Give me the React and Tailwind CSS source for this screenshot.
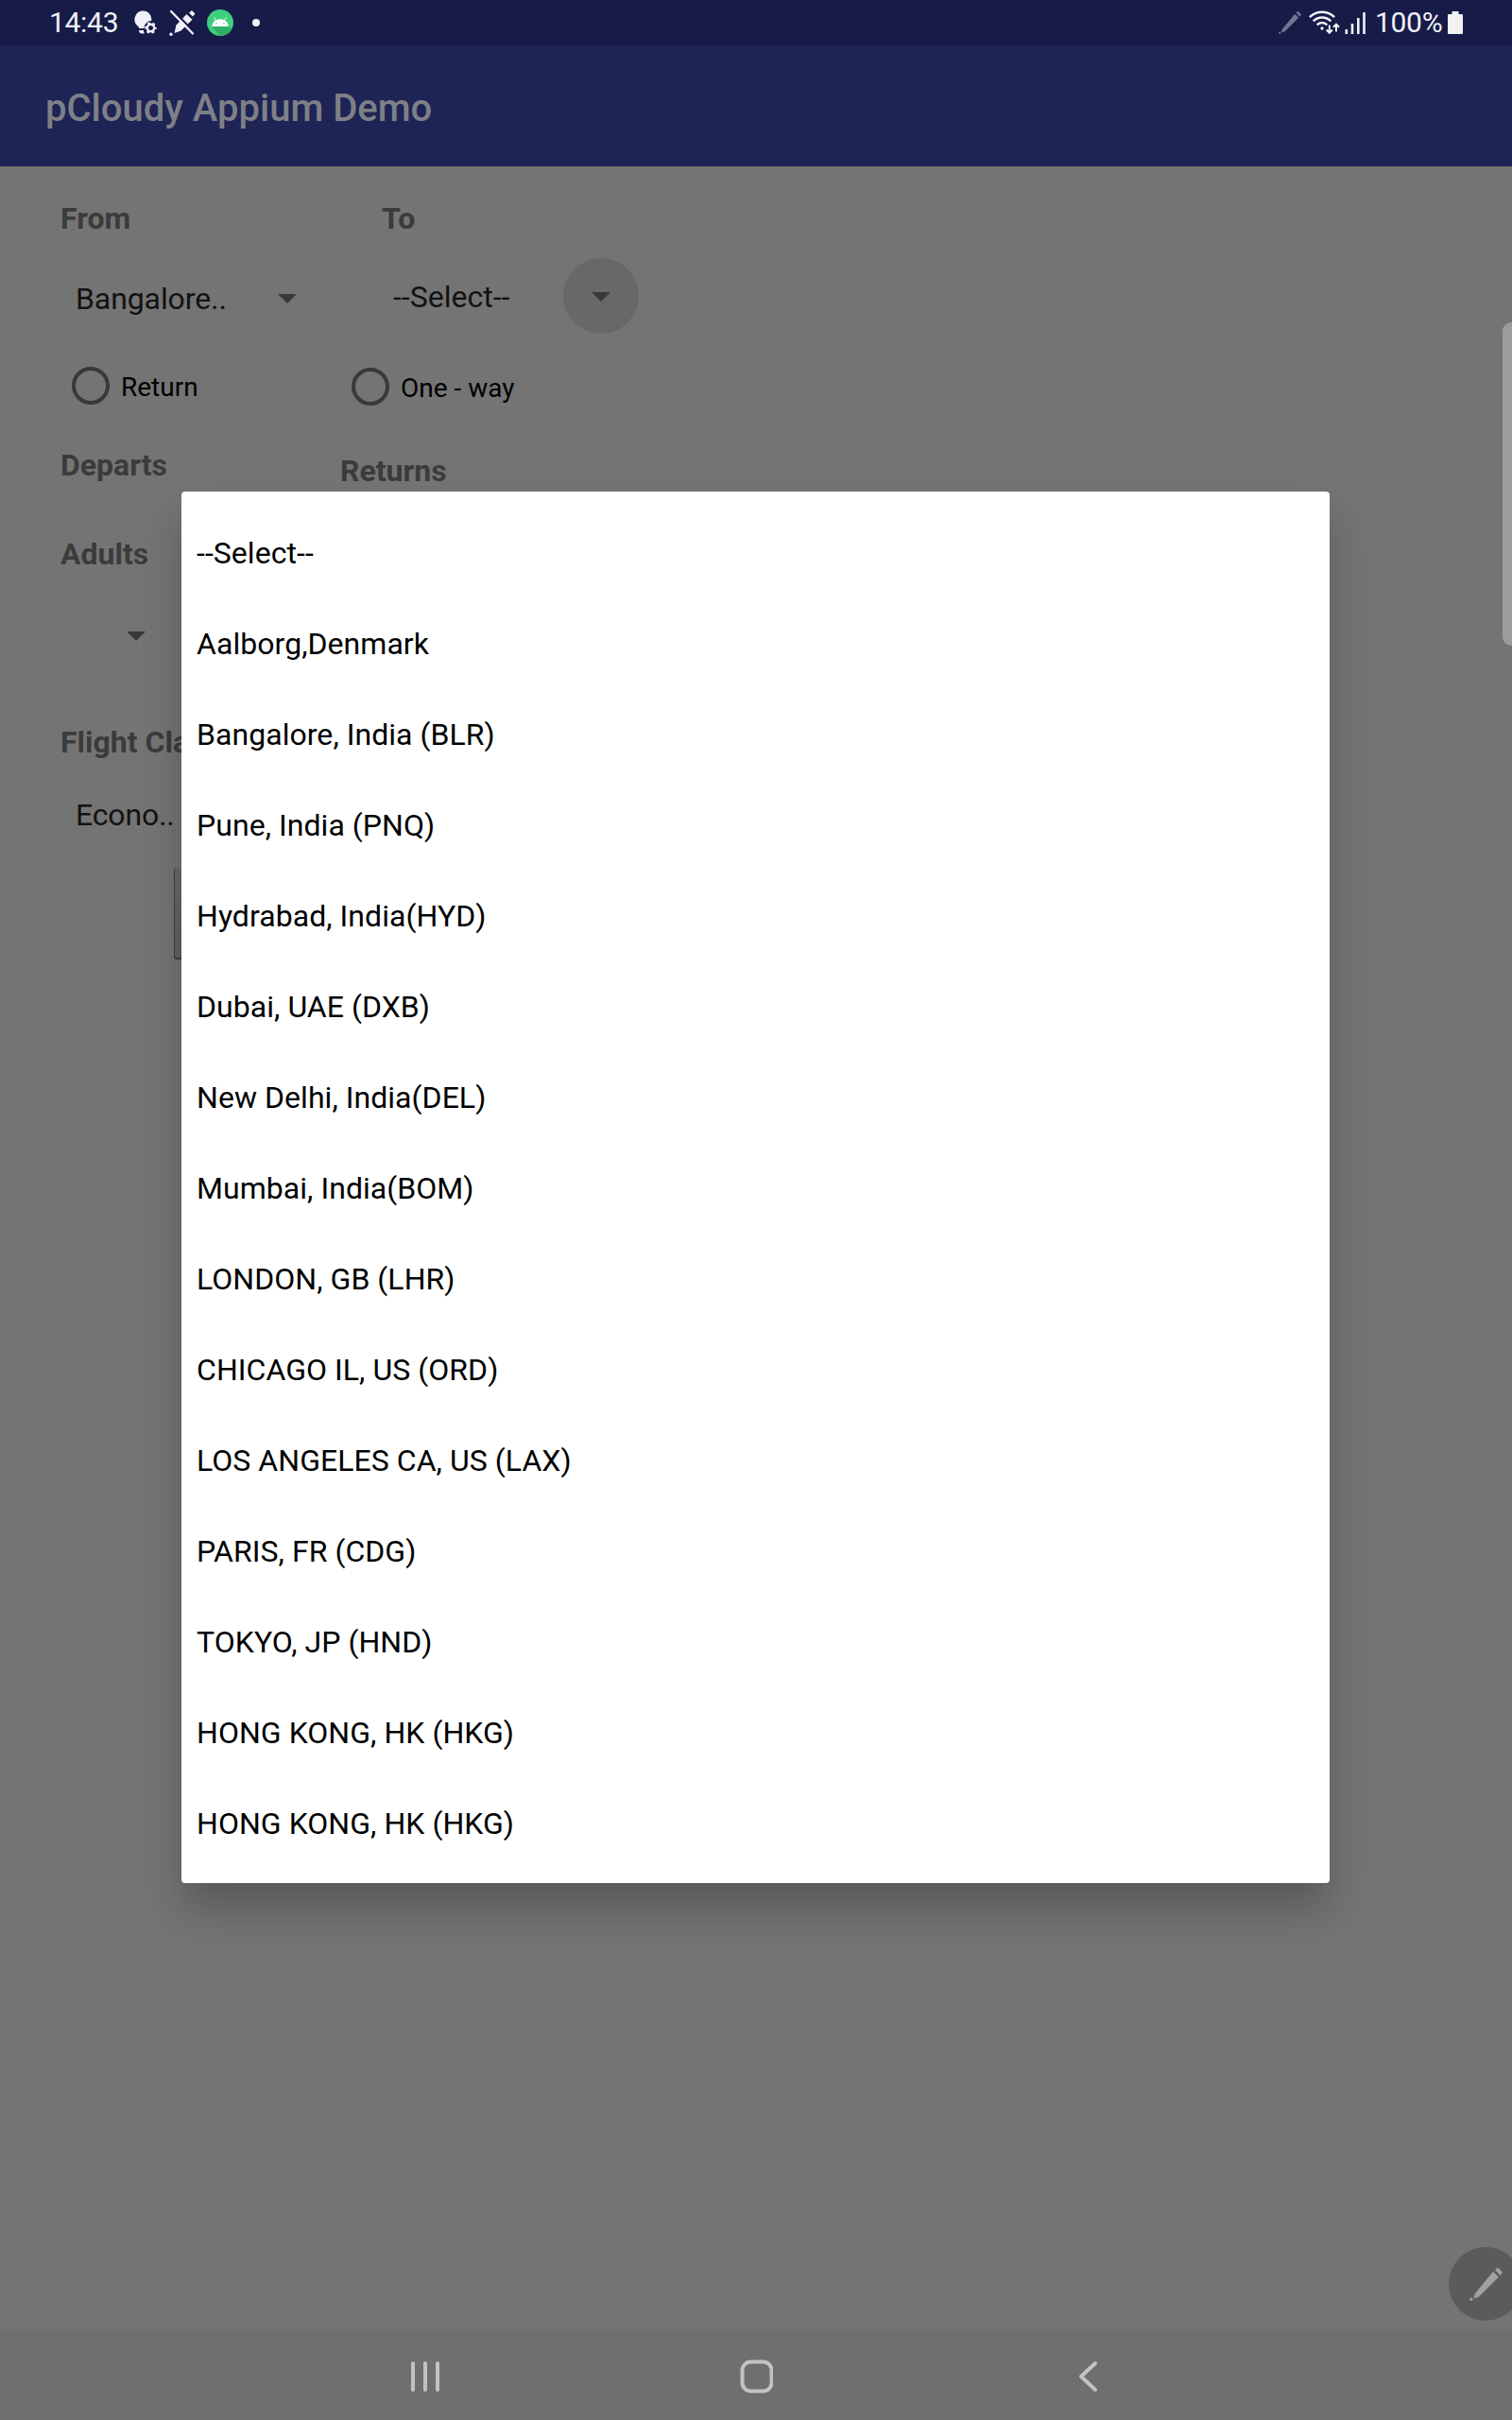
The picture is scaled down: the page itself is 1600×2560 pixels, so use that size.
const cities = [
  "--Select--",
  "Aalborg,Denmark",
  "Bangalore, India (BLR)",
  "Pune, India (PNQ)",
  "Hydrabad, India(HYD)",
  "Dubai, UAE (DXB)",
  "New Delhi, India(DEL)",
  "Mumbai, India(BOM)",
  "LONDON, GB (LHR)",
  "CHICAGO IL, US (ORD)",
  "LOS ANGELES CA, US (LAX)",
  "PARIS, FR (CDG)",
  "TOKYO, JP (HND)",
  "HONG KONG, HK (HKG)",
  "HONG KONG, HK (HKG)",
];

function BulbGearIcon() {
  return (
    <svg width="24" height="26" viewBox="0 0 24 26" className="ml-[16px]">
      <path d="M9.500 0.500a9 9 0 0 0-5.800 15.900c.9.800 1.300 1.500 1.500 2.600h5.200a8.300 8.300 0 0 1 7.900-8.200A9 9 0 0 0 9.500.5z" fill="#f0f1f7" />
      <path d="M5 21h4.800l1 3.500H8.500A3.500 3.500 0 0 1 5 21z" fill="#f0f1f7" />
      <circle cx="17.500" cy="18.500" r="3.700" fill="none" stroke="#f0f1f7" strokeWidth="2.400" />
      <circle cx="17.500" cy="18.500" r="5.300" fill="none" stroke="#f0f1f7" strokeWidth="2" strokeDasharray="2.775 2.775" strokeDashoffset="1.400" />
    </svg>
  );
}

function PenOffIcon() {
  return (
    <svg width="28" height="28" viewBox="0 0 28 28" className="ml-[13px]">
      <path d="M18.500 5l6 5.700L12.500 22.500l-7 2.500L7.500 16.500z" fill="#f0f1f7" />
      <path d="M21 3.600L24 .9l3.500 3.500-2.600 3z" fill="#f0f1f7" />
      <circle cx="2" cy="26.300" r="1.700" fill="#f0f1f7" />
      <path d="M3.500 0L27 24.500" stroke="#171b48" strokeWidth="2" />
      <path d="M2 2L25 25.500" stroke="#f0f1f7" strokeWidth="2.300" strokeLinecap="round" />
    </svg>
  );
}

function AndroidIcon() {
  return (
    <svg width="28" height="28" viewBox="0 0 28 28" className="ml-[12px]">
      <circle cx="14" cy="14" r="14" fill="#3ecf7c" />
      <path d="M22.800 17.800H5.400l5.600 7.200 4 3a14 14 0 0 0 11.500-7.500z" fill="#2fae68" />
      <path d="M5.300 18a8.700 7.800 0 0 1 17.400 0z" fill="#fff" />
      <path d="M7.500 8.500l2.200 3.800M20.500 8.500l-2.200 3.800" stroke="#fff" strokeWidth="1" />
      <circle cx="10" cy="14.800" r=".8" fill="#3ecf7c" />
      <circle cx="18" cy="14.800" r=".8" fill="#3ecf7c" />
    </svg>
  );
}

function PenIcon({ size, className, color }) {
  return (
    <svg width={size} height={size} viewBox="0 0 34 34" className={className} fill={color}>
      <path d="M24.300 4l5.700 5.500L12 27.500c-2 2-5 4.300-7.300 3.700-.7-2.200 1.200-5 3-7.200z" />
      <path d="M26.200 2.300L28.300.3q.9-.5 1.700.2l3.300 3.300q.8.900.2 1.700l-2 2.200z" />
      <circle cx="1.800" cy="32.200" r="1.700" />
    </svg>
  );
}

function WifiIcon() {
  return (
    <svg width="33" height="26" viewBox="0 0 33 26" className="ml-[8px]" fill="none" stroke="#f0f1f7" strokeWidth="2.500">
      <path d="M.9 7.200a18.500 18.500 0 0 1 26.200 0M4.700 11.300a13 13 0 0 1 18.600 0M8.700 15.300a7.500 7.500 0 0 1 10.600 0" />
      <circle cx="14" cy="19" r="1.700" fill="#f0f1f7" stroke="none" />
      <path d="M21.800 15.500v8M18.700 20.500l3.100 3.200 3.100-3.200M29 22.500v-7.500M26 17.700l3-3 3 3" strokeWidth="2" />
    </svg>
  );
}

function SignalIcon() {
  return (
    <svg width="22" height="23" viewBox="0 0 22 23" className="ml-[5px]" stroke="#f0f1f7" strokeWidth="2.600">
      <path d="M1.800 18v5M8 12v11M14.300 6v17M20.500 0v23" />
    </svg>
  );
}

function StatusBar() {
  return (
    <div className="flex h-[48px] items-center justify-between bg-[#171b48] pr-[52px] pl-[52px] text-[30px] leading-[48px] text-[#f0f1f7]">
      <div className="flex h-[46px] items-center">
        <span className="w-[74px] tracking-[-0.3px]">14:43</span>
        <BulbGearIcon />
        <PenOffIcon />
        <AndroidIcon />
        <span className="ml-[20px] size-[8px] rounded-full bg-[#f0f1f7]" />
      </div>
      <div className="flex h-[46px] items-center">
        <PenIcon size={24} color="#717492" />
        <WifiIcon />
        <SignalIcon />
        <span className="ml-[10px] w-[74px] tracking-[-0.3px]">100%</span>
        <svg width="16" height="24" viewBox="0 0 16 24" className="ml-[3px]" fill="#f2f2f4">
          <path d="M4.500 0h7v3H15a1 1 0 0 1 1 1v19a1 1 0 0 1-1 1H1a1 1 0 0 1-1-1V4a1 1 0 0 1 1-1h3.500z" />
        </svg>
      </div>
    </div>
  );
}

function Caret({ className }) {
  return (
    <svg width="20" height="10" viewBox="0 0 20 10" className={className} fill="#393939">
      <path d="M0 0h20L10 10z" />
    </svg>
  );
}

function Label({ children, className }) {
  return <div className={`text-[32px] leading-[40px] font-bold whitespace-nowrap text-[#3b3b3b] ${className}`}>{children}</div>;
}

function Radio({ label, className }) {
  return (
    <div className={`flex items-center ${className}`}>
      <span className="size-[40px] rounded-full border-4 border-[#393939]" />
      <span className="ml-[12px] pt-[3px] text-[28px] leading-[38px] whitespace-nowrap text-black">{label}</span>
    </div>
  );
}

function BookingForm() {
  return (
    <main className="h-[2288px] overflow-hidden bg-[#747474] pt-[35px] pl-[64px]">
      <div className="flex h-[40px]">
        <Label className="w-[340px]">From</Label>
        <Label>To</Label>
      </div>
      <div className="mt-[22px] flex h-[80px] items-center text-[32px] leading-[40px] text-[#121212]">
        <div className="flex w-[335px] items-center pt-[5px] pl-[16px]">
          <span className="w-[214px] tracking-[-0.1px]">Bangalore..</span>
          <Caret />
        </div>
        <div className="flex items-center pl-[17px]">
          <span className="w-[180px] pt-px">--Select--</span>
          <span className="flex size-[80px] items-center justify-center rounded-full bg-[#686868]">
            <Caret className="mt-[2px]" />
          </span>
        </div>
      </div>
      <div className="mt-[35px] flex h-[42px] pl-[12px]">
        <Radio label="Return" className="h-[40px] w-[296px]" />
        <Radio label="One - way" className="mt-px h-[40px]" />
      </div>
      <div className="mt-[42px] flex h-[47px]">
        <Label className="w-[296px]">Departs</Label>
        <Label className="mt-[6px]">Returns</Label>
      </div>
      <Label className="mt-[47px]">Adults</Label>
      <Caret className="mt-[62px] ml-[70px]" />
      <Label className="mt-[87px] w-[128px] overflow-hidden">Flight Cla</Label>
      <div className="mt-[37px] pl-[16px] text-[32px] leading-[40px] tracking-[-0.15px] text-[#121212]">Econo..</div>
      <div className="mt-[36px] ml-[120px] h-[97px] w-[300px] rounded-[3px] border-b-2 border-l border-[#3c3c3c] bg-linear-to-b from-[#6a6a6a] to-[#606060]" />
    </main>
  );
}

function NavBar() {
  return (
    <nav className="flex h-[96px] bg-[#6f6f6f] pt-[32px] pl-[434px]">
      <svg width="32" height="36" viewBox="0 0 32 36" stroke="#c2c2c2" strokeWidth="4" strokeLinecap="round">
        <path d="M3 4v28M16 4v28M29 4v28" />
      </svg>
      <svg width="36" height="36" viewBox="0 0 36 36" className="ml-[316px]" fill="none" stroke="#c2c2c2" strokeWidth="4">
        <rect x="3.500" y="2.500" width="31" height="31" rx="9" />
      </svg>
      <svg width="22" height="36" viewBox="0 0 22 36" className="ml-[323px]" fill="none" stroke="#c2c2c2" strokeWidth="4" strokeLinecap="round" strokeLinejoin="round">
        <path d="M18 4L3 18l15 14" />
      </svg>
    </nav>
  );
}

export default function App() {
  return (
    <div className="relative h-[2560px] w-[1600px] overflow-hidden font-[Roboto,sans-serif]">
      <StatusBar />
      <header className="flex h-[128px] items-center bg-[#1e2455] pt-[6px] pl-[48px] text-[40px] leading-[48px] font-medium text-[#7f8087]">
        pCloudy Appium Demo
      </header>
      <BookingForm />
      <NavBar />

      <ul className="absolute top-[520px] left-[192px] w-[1215px] rounded-[4px] bg-white py-[16px] text-[32px] leading-[40px] tracking-[0.05px] text-black shadow-[0_28px_44px_-2px_rgba(0,0,0,0.24)]">
        {cities.map((city, i) => (
          <li key={i} className="flex h-[96px] items-center pt-px pl-[16px]">
            {city}
          </li>
        ))}
      </ul>

      <div className="absolute top-[341px] right-0 h-[342px] w-[10px] rounded-l-[9px] bg-[#9c9c9c]" />
      <div className="absolute top-[2377px] left-[1533px] flex size-[78px] items-center justify-center rounded-full bg-[#5b5b5b]">
        <PenIcon size={35} color="#a0a0a0" />
      </div>
    </div>
  );
}
